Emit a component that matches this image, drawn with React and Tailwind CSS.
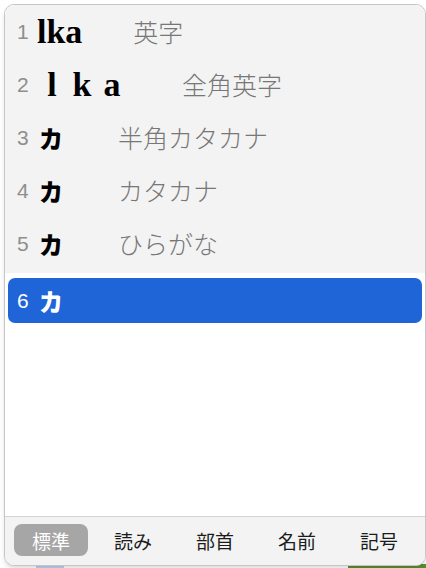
import React from "react";

const jp = { fontFamily: '"Noto Sans CJK JP", "Noto Sans", sans-serif' };
const serif = { fontFamily: '"Liberation Serif", "Noto Sans CJK JP", serif' };
const sans = { fontFamily: '"Liberation Sans", Arial, sans-serif' };

const rows = [
  { n: "1", label: "英字", kind: "latin" },
  { n: "2", label: "全角英字", kind: "wide" },
  { n: "3", label: "半角カタカナ", kind: "kana" },
  { n: "4", label: "カタカナ", kind: "kana" },
  { n: "5", label: "ひらがな", kind: "kana" },
];

const tabs = ["標準", "読み", "部首", "名前", "記号"];

const Candidate = ({ kind, white }) => {
  const color = white ? "text-white" : "text-black";
  if (kind === "latin") {
    return (
      <span className={`text-[34px] font-bold leading-none ${color}`} style={serif}>
        lka
      </span>
    );
  }
  if (kind === "wide") {
    return (
      <span className={`flex text-[34px] font-bold leading-none ${color}`} style={serif}>
        <span className="w-[30px] text-center">l</span>
        <span className="w-[30px] text-center">k</span>
        <span className="w-[30px] text-center">a</span>
      </span>
    );
  }
  return (
    <span className={`pl-[2px] text-[24px] font-black leading-none ${color}`} style={jp}>
      カ
    </span>
  );
};

const App = () => {
  return (
    <div className="relative w-[426px] h-[568px] overflow-hidden bg-white">
      {/* document behind the popup */}
      <div className="text-[28px] leading-[40px] text-[#333] -mt-[35px] whitespace-nowrap" style={jp}>
        とカタカナに直せるバ
      </div>
      <div className="absolute left-0 bottom-0 h-[3px] w-[28px] ml-[36px] bg-[#bcd3ee]" />
      <div className="absolute right-0 bottom-0 h-[4px] w-[78px] bg-[#5b8f2f]" />

      {/* candidate popup */}
      <div className="absolute left-[4px] top-[4px] w-[422px] h-[562px] flex flex-col overflow-hidden rounded-[10px] border border-[#c6c6c6] bg-white shadow-md">
        <div className="bg-[#f3f3f3] pb-[3px]">
          {rows.map((r) => (
            <div key={r.n} className="flex items-center h-[53px] pl-[12px]">
              <span className="w-[20px] text-[21px] text-[#8e8e8e] leading-none" style={sans}>
                {r.n}
              </span>
              <Candidate kind={r.kind} />
              <span
                className={`text-[25px] font-light text-[#777] leading-none ${
                  r.kind === "latin" ? "ml-[51px]" : "ml-[55px]"
                }`}
                style={jp}
              >
                {r.label}
              </span>
            </div>
          ))}
        </div>

        <div className="flex-1 px-[3px] pt-[5px]">
          <div className="flex items-center h-[45px] rounded-[7px] bg-[#1f65d8] pl-[9px]">
            <span className="w-[20px] text-[21px] text-white leading-none" style={sans}>
              6
            </span>
            <Candidate kind="kana" white />
          </div>
        </div>

        <div className="h-[49px] border-t border-[#d4d4d4] bg-[#f3f3f3] flex gap-[8px] px-[9px] pt-[7px]">
          {tabs.map((t, i) => (
            <div
              key={t}
              className={`w-[74px] h-[32px] flex items-center justify-center rounded-[8px] text-[19px] leading-none ${
                i === 0 ? "bg-[#a6a6a6] text-white" : "text-[#1c1c1c]"
              }`}
              style={jp}
            >
              {t}
            </div>
          ))}
        </div>
      </div>
    </div>
  );
};

export default App;
